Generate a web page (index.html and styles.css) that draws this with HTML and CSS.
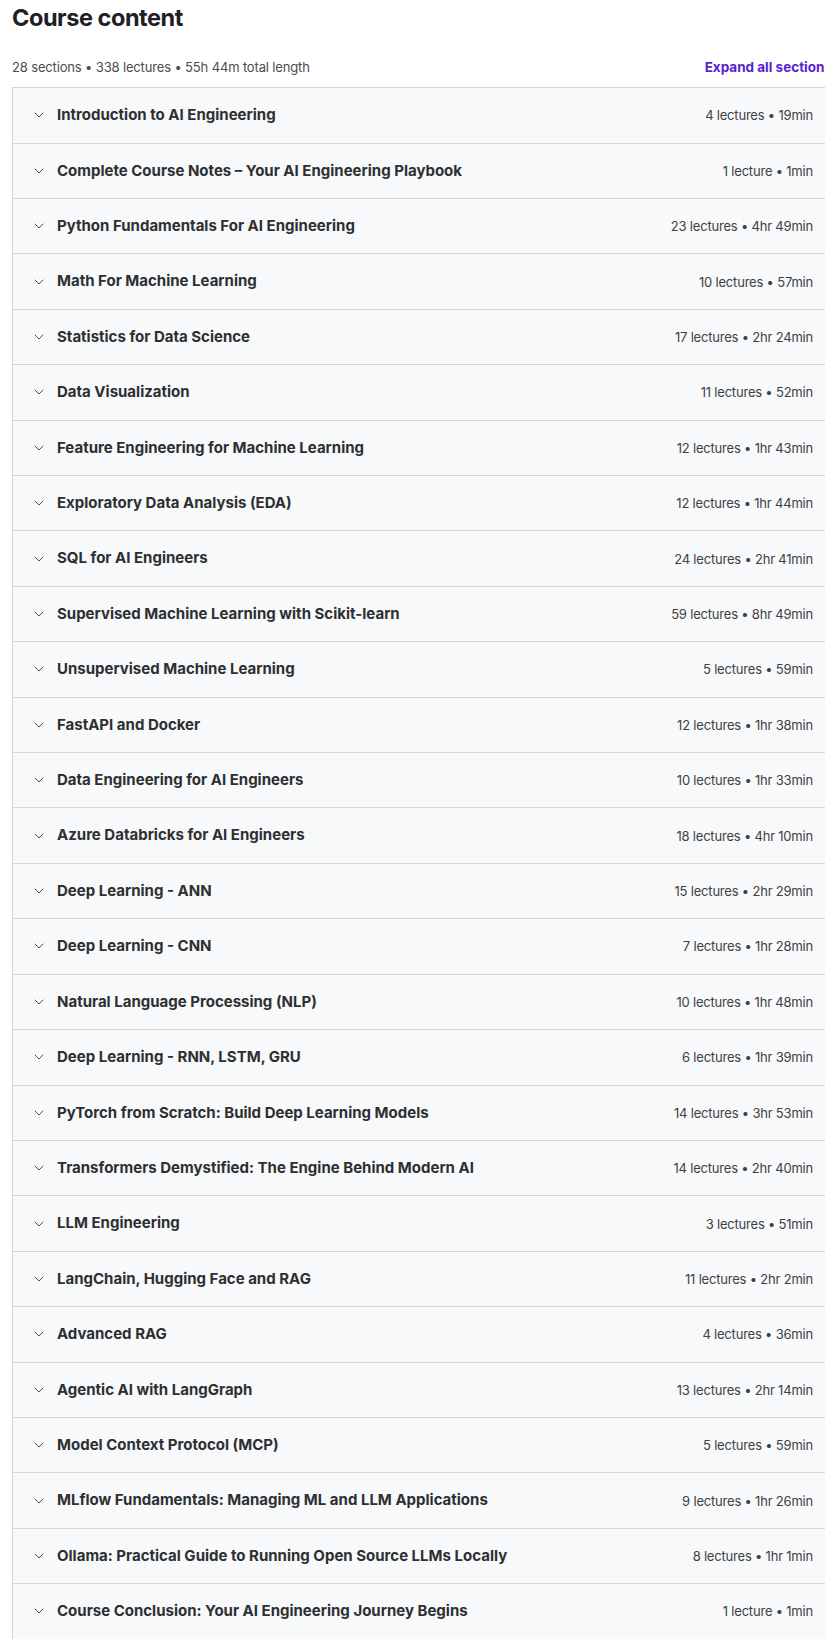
FILE: index.html
```html
<!DOCTYPE html>
<html>
<head lang="en">
    <meta charset="UTF-8">
    <title>Course content</title>
    <link rel="stylesheet" href="styles.css">
</head>
<body>
    <div id="curriculum">
        <h2 class="title">Course content</h2>
        <div class="summary">
            <span class="summary-text">28 sections &bull; 338 lectures &bull; 55h 44m total length</span>
            <button class="expand-all">Expand all sections</button>
        </div>
        <div class="sections">
            <div class="section"><svg class="chevron" viewBox="0 0 24 24"><path d="M6 9l6 6 6-6"/></svg><span class="section-title">Introduction to AI Engineering</span><span class="section-meta">4 lectures &bull; 19min</span></div>
            <div class="section"><svg class="chevron" viewBox="0 0 24 24"><path d="M6 9l6 6 6-6"/></svg><span class="section-title">Complete Course Notes &ndash; Your AI Engineering Playbook</span><span class="section-meta">1 lecture &bull; 1min</span></div>
            <div class="section"><svg class="chevron" viewBox="0 0 24 24"><path d="M6 9l6 6 6-6"/></svg><span class="section-title">Python Fundamentals For AI Engineering</span><span class="section-meta">23 lectures &bull; 4hr 49min</span></div>
            <div class="section"><svg class="chevron" viewBox="0 0 24 24"><path d="M6 9l6 6 6-6"/></svg><span class="section-title">Math For Machine Learning</span><span class="section-meta">10 lectures &bull; 57min</span></div>
            <div class="section"><svg class="chevron" viewBox="0 0 24 24"><path d="M6 9l6 6 6-6"/></svg><span class="section-title">Statistics for Data Science</span><span class="section-meta">17 lectures &bull; 2hr 24min</span></div>
            <div class="section"><svg class="chevron" viewBox="0 0 24 24"><path d="M6 9l6 6 6-6"/></svg><span class="section-title">Data Visualization</span><span class="section-meta">11 lectures &bull; 52min</span></div>
            <div class="section"><svg class="chevron" viewBox="0 0 24 24"><path d="M6 9l6 6 6-6"/></svg><span class="section-title">Feature Engineering for Machine Learning</span><span class="section-meta">12 lectures &bull; 1hr 43min</span></div>
            <div class="section"><svg class="chevron" viewBox="0 0 24 24"><path d="M6 9l6 6 6-6"/></svg><span class="section-title">Exploratory Data Analysis (EDA)</span><span class="section-meta">12 lectures &bull; 1hr 44min</span></div>
            <div class="section"><svg class="chevron" viewBox="0 0 24 24"><path d="M6 9l6 6 6-6"/></svg><span class="section-title">SQL for AI Engineers</span><span class="section-meta">24 lectures &bull; 2hr 41min</span></div>
            <div class="section"><svg class="chevron" viewBox="0 0 24 24"><path d="M6 9l6 6 6-6"/></svg><span class="section-title">Supervised Machine Learning with Scikit-learn</span><span class="section-meta">59 lectures &bull; 8hr 49min</span></div>
            <div class="section"><svg class="chevron" viewBox="0 0 24 24"><path d="M6 9l6 6 6-6"/></svg><span class="section-title">Unsupervised Machine Learning</span><span class="section-meta">5 lectures &bull; 59min</span></div>
            <div class="section"><svg class="chevron" viewBox="0 0 24 24"><path d="M6 9l6 6 6-6"/></svg><span class="section-title">FastAPI and Docker</span><span class="section-meta">12 lectures &bull; 1hr 38min</span></div>
            <div class="section"><svg class="chevron" viewBox="0 0 24 24"><path d="M6 9l6 6 6-6"/></svg><span class="section-title">Data Engineering for AI Engineers</span><span class="section-meta">10 lectures &bull; 1hr 33min</span></div>
            <div class="section"><svg class="chevron" viewBox="0 0 24 24"><path d="M6 9l6 6 6-6"/></svg><span class="section-title">Azure Databricks for AI Engineers</span><span class="section-meta">18 lectures &bull; 4hr 10min</span></div>
            <div class="section"><svg class="chevron" viewBox="0 0 24 24"><path d="M6 9l6 6 6-6"/></svg><span class="section-title">Deep Learning - ANN</span><span class="section-meta">15 lectures &bull; 2hr 29min</span></div>
            <div class="section"><svg class="chevron" viewBox="0 0 24 24"><path d="M6 9l6 6 6-6"/></svg><span class="section-title">Deep Learning - CNN</span><span class="section-meta">7 lectures &bull; 1hr 28min</span></div>
            <div class="section"><svg class="chevron" viewBox="0 0 24 24"><path d="M6 9l6 6 6-6"/></svg><span class="section-title">Natural Language Processing (NLP)</span><span class="section-meta">10 lectures &bull; 1hr 48min</span></div>
            <div class="section"><svg class="chevron" viewBox="0 0 24 24"><path d="M6 9l6 6 6-6"/></svg><span class="section-title">Deep Learning - RNN, LSTM, GRU</span><span class="section-meta">6 lectures &bull; 1hr 39min</span></div>
            <div class="section"><svg class="chevron" viewBox="0 0 24 24"><path d="M6 9l6 6 6-6"/></svg><span class="section-title">PyTorch from Scratch: Build Deep Learning Models</span><span class="section-meta">14 lectures &bull; 3hr 53min</span></div>
            <div class="section"><svg class="chevron" viewBox="0 0 24 24"><path d="M6 9l6 6 6-6"/></svg><span class="section-title">Transformers Demystified: The Engine Behind Modern AI</span><span class="section-meta">14 lectures &bull; 2hr 40min</span></div>
            <div class="section"><svg class="chevron" viewBox="0 0 24 24"><path d="M6 9l6 6 6-6"/></svg><span class="section-title">LLM Engineering</span><span class="section-meta">3 lectures &bull; 51min</span></div>
            <div class="section"><svg class="chevron" viewBox="0 0 24 24"><path d="M6 9l6 6 6-6"/></svg><span class="section-title">LangChain, Hugging Face and RAG</span><span class="section-meta">11 lectures &bull; 2hr 2min</span></div>
            <div class="section"><svg class="chevron" viewBox="0 0 24 24"><path d="M6 9l6 6 6-6"/></svg><span class="section-title">Advanced RAG</span><span class="section-meta">4 lectures &bull; 36min</span></div>
            <div class="section"><svg class="chevron" viewBox="0 0 24 24"><path d="M6 9l6 6 6-6"/></svg><span class="section-title">Agentic AI with LangGraph</span><span class="section-meta">13 lectures &bull; 2hr 14min</span></div>
            <div class="section"><svg class="chevron" viewBox="0 0 24 24"><path d="M6 9l6 6 6-6"/></svg><span class="section-title">Model Context Protocol (MCP)</span><span class="section-meta">5 lectures &bull; 59min</span></div>
            <div class="section"><svg class="chevron" viewBox="0 0 24 24"><path d="M6 9l6 6 6-6"/></svg><span class="section-title">MLflow Fundamentals: Managing ML and LLM Applications</span><span class="section-meta">9 lectures &bull; 1hr 26min</span></div>
            <div class="section"><svg class="chevron" viewBox="0 0 24 24"><path d="M6 9l6 6 6-6"/></svg><span class="section-title">Ollama: Practical Guide to Running Open Source LLMs Locally</span><span class="section-meta">8 lectures &bull; 1hr 1min</span></div>
            <div class="section"><svg class="chevron" viewBox="0 0 24 24"><path d="M6 9l6 6 6-6"/></svg><span class="section-title">Course Conclusion: Your AI Engineering Journey Begins</span><span class="section-meta">1 lecture &bull; 1min</span></div>
        </div>
    </div>
</body>
</html>
```

FILE: styles.css
```css
*{
    margin: 0;
    padding: 0;
    box-sizing: border-box;
}
html,body{
    overflow: hidden;
}
body{
    background: #fff;
    color: #2d2f31;
    font-family: Inter, "Noto Sans", sans-serif;
}
#curriculum{
    width: 838px;
    padding: 4px 0 0 12px;
}
.title{
    font-size: 23.5px;
    font-weight: 700;
    line-height: 1.2;
    letter-spacing: -0.45px;
    color: #1f2026;
}
.summary{
    display: flex;
    justify-content: space-between;
    align-items: center;
    margin-top: 23px;
    height: 24px;
    margin-bottom: 8px;
}
.summary-text{
    font-size: 13px;
    letter-spacing: -0.15px;
    color: #4a4d50;
}
.expand-all{
    margin-right: 6px;
    border: none;
    background: none;
    font-family: inherit;
    font-size: 13.5px;
    font-weight: 700;
    color: #5624d0;
    cursor: pointer;
}
.sections{
    border: 1px solid #d1d7dc;
    border-bottom: none;
}
.section{
    display: flex;
    align-items: center;
    padding: 16px 24px 16px 18px;
    background: #f7f9fa;
    border-bottom: 1px solid #d1d7dc;
    cursor: pointer;
}
.chevron{
    width: 16px;
    height: 16px;
    flex-shrink: 0;
    margin-right: 10px;
    fill: none;
    stroke: #3e4143;
    stroke-width: 1.4;
    stroke-linecap: round;
    stroke-linejoin: round;
}
.section-title{
    flex: 1;
    font-size: 15px;
    font-weight: 700;
    line-height: 22.4px;
}
.section-meta{
    margin-left: 16px;
    font-size: 13px;
    letter-spacing: -0.2px;
    color: #3e4143;
    white-space: nowrap;
}
```
